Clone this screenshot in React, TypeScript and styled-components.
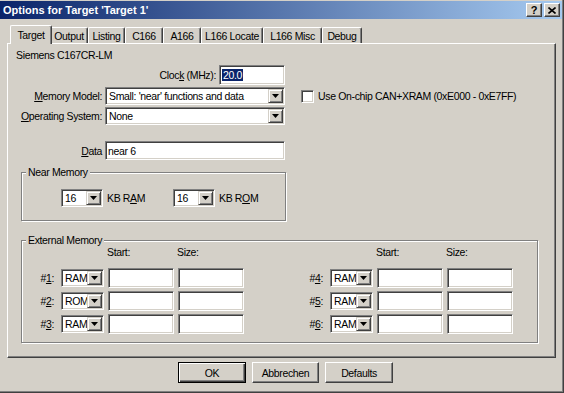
import React from 'react';
import styled, {createGlobalStyle} from 'styled-components';

const FACE = '#d4d0c8';
const SHADOW = '#808080';
const DARK = '#404040';

const GlobalStyle = createGlobalStyle`
  html, body {
    margin: 0;
    padding: 0;
    background: ${FACE};
  }
  body {
    font-family: "Liberation Sans", Arial, sans-serif;
    font-size: 10.5px;
    color: #000;
  }
  * {
    box-sizing: border-box;
  }
`

const Window = styled.div`
  width: 564px;
  height: 393px;
  padding: 1px 1px 0 0;
  background: ${FACE};
  border-right: 1px solid ${DARK};
  border-bottom: 1px solid ${DARK};
  box-shadow: inset -1px -1px 0 ${SHADOW};
  letter-spacing: -0.35px;
  overflow: hidden;
`

const TitleBar = styled.div`
  height: 18px;
  display: flex;
  align-items: center;
  padding: 0 2px 0 3px;
  background: linear-gradient(to right, #0a246a, #a6caf0);
  color: #fff;
  font-size: 11px;
  font-weight: bold;
  letter-spacing: 0;
`

const Title = styled.span`
  flex: 1;
`

const CaptionButtons = styled.div`
  display: flex;
  gap: 2px;
`

const CaptionButton = styled.div`
  width: 16px;
  height: 14px;
  display: flex;
  align-items: center;
  justify-content: center;
  background: ${FACE};
  border: 1px solid;
  border-color: #fff ${DARK} ${DARK} #fff;
  box-shadow: inset -1px -1px 0 ${SHADOW};
  color: #000;
  font-size: 11px;
  font-weight: bold;
  line-height: 1;
`

const TabStrip = styled.div`
  display: flex;
  align-items: flex-end;
  height: 18px;
  margin-top: 6px;
  padding-left: 12px;
`

const Tab = styled.div<{ $w: number; $active?: boolean }>`
  position: relative;
  z-index: ${p => (p.$active ? 1 : 0)};
  width: ${p => p.$w}px;
  height: ${p => (p.$active ? 19 : 16)}px;
  margin: 0 ${p => (p.$active ? -2 : 0)}px ${p => (p.$active ? -1 : 0)}px;
  display: flex;
  align-items: ${p => (p.$active ? 'flex-start' : 'center')};
  padding-top: ${p => (p.$active ? 3 : 0)}px;
  justify-content: center;
  background: ${FACE};
  border-top: 1px solid #fff;
  border-left: 1px solid #fff;
  border-right: 1px solid ${DARK};
  border-radius: 2px 2px 0 0;
  box-shadow: inset -1px 0 0 ${SHADOW};
  white-space: nowrap;
`

const Panel = styled.div`
  width: 549px;
  height: 315px;
  margin-left: 7px;
  border: 1px solid;
  border-color: #fff ${DARK} ${DARK} #fff;
  box-shadow: inset -1px -1px 0 ${SHADOW};
`

const DeviceName = styled.div`
  margin-top: 5px;
  padding-left: 8px;
  line-height: 13px;
`

const FormRow = styled.div<{ $top: number; $h: number }>`
  display: flex;
  align-items: center;
  height: ${p => p.$h}px;
  margin-top: ${p => p.$top}px;
`

const FieldLabel = styled.span<{ $w: number }>`
  width: ${p => p.$w}px;
  flex-shrink: 0;
  padding-right: 3px;
  text-align: right;
  white-space: nowrap;
`

const Sunken = styled.div<{ $w: number }>`
  width: ${p => p.$w}px;
  flex-shrink: 0;
  display: flex;
  align-items: center;
  background: #fff;
  border: 1px solid;
  border-color: ${SHADOW} #fff #fff ${SHADOW};
  box-shadow: inset 1px 1px 0 ${DARK}, inset -1px -1px 0 ${FACE};
  white-space: nowrap;
  overflow: hidden;
`

const TextBox = styled(Sunken)`
  height: 100%;
  padding-left: 2px;
`

const Selected = styled.span`
  background: #0a246a;
  color: #fff;
  padding: 0 1px;
`

const Combo = styled(Sunken)`
  height: 18px;
  padding: 1px;
  align-self: center;
`

const ComboText = styled.span`
  flex: 1;
  padding-left: 2px;
  overflow: hidden;
`

const DropButton = styled.span`
  width: 15px;
  height: 100%;
  flex-shrink: 0;
  display: flex;
  align-items: center;
  justify-content: center;
  background: ${FACE};
  border: 1px solid;
  border-color: ${FACE} ${DARK} ${DARK} ${FACE};
  box-shadow: inset 1px 1px 0 #fff, inset -1px -1px 0 ${SHADOW};
`

const CheckBox = styled(Sunken)`
  height: 13px;
  margin-left: 16px;
`

const CheckLabel = styled.span`
  margin-left: 4px;
  white-space: nowrap;
`

const Group = styled.div<{ $w: number; $h: number; $top: number }>`
  position: relative;
  width: ${p => p.$w}px;
  height: ${p => p.$h}px;
  margin: ${p => p.$top}px 0 0 13px;
  border: 1px solid ${SHADOW};
  box-shadow: inset 1px 1px 0 #fff, 1px 1px 0 #fff;
`

const Legend = styled.span`
  position: absolute;
  top: -7px;
  left: 4px;
  padding: 0 2px;
  line-height: 13px;
  background: ${FACE};
  white-space: nowrap;
`

const NearRow = styled.div`
  display: flex;
  align-items: center;
  height: 18px;
  margin: 16px 0 0 39px;
`

const UnitLabel = styled.span`
  width: 72px;
  padding-left: 4px;
  white-space: nowrap;
`

const ExtColumns = styled.div`
  display: flex;
  gap: 47px;
  padding-top: 5px;
`

const ExtGrid = styled.div`
  display: grid;
  grid-template-columns: 35px 43px 66px 66px;
  grid-template-rows: 19px repeat(3, 20px);
  column-gap: 4px;
  row-gap: 3px;
`

const HeadSpacer = styled.span`
  grid-column: 1 / span 2;
`

const ColHead = styled.span`
  align-self: start;
  margin-left: -1px;
  line-height: 13px;
`

const SlotLabel = styled.span`
  align-self: center;
  padding-right: 3px;
  text-align: right;
`

const ButtonBar = styled.div`
  display: flex;
  gap: 6px;
  margin-top: 4px;
  padding-left: 178px;
`

const Button = styled.div<{ $w: number; $default?: boolean }>`
  width: ${p => p.$w}px;
  height: 21px;
  display: flex;
  align-items: center;
  justify-content: center;
  background: ${FACE};
  border: 1px solid;
  border-color: ${p => (p.$default ? '#000' : `#fff ${DARK} ${DARK} #fff`)};
  box-shadow: ${p =>
    p.$default
      ? `inset 1px 1px 0 #fff, inset -1px -1px 0 ${DARK}, inset -2px -2px 0 ${SHADOW}`
      : `inset -1px -1px 0 ${SHADOW}`};
`

const U = styled.span`
  text-decoration: underline;
`

const Arrow = () => (
  <svg width="7" height="4" viewBox="0 0 7 4">
    <polygon points="0,0 7,0 3.5,4" fill="#000" />
  </svg>
)

const CloseGlyph = () => (
  <svg width="8" height="7" viewBox="0 0 8 7">
    <path d="M0.5 0.5 L7.5 6.5 M7.5 0.5 L0.5 6.5" stroke="#000" strokeWidth="1.6" />
  </svg>
)

const DropDown = ({w, value}: { w: number; value: string }) => (
  <Combo $w={w}>
    <ComboText>{value}</ComboText>
    <DropButton><Arrow /></DropButton>
  </Combo>
)

const tabs = [
  {name: 'Target', w: 42, active: true},
  {name: 'Output', w: 38},
  {name: 'Listing', w: 37},
  {name: 'C166', w: 38},
  {name: 'A166', w: 38},
  {name: 'L166 Locate', w: 62},
  {name: 'L166 Misc', w: 59},
  {name: 'Debug', w: 40},
]

type Slot = { n: string; kind: string }

const ExtBlock = ({slots}: { slots: Slot[] }) => (
  <ExtGrid>
    <HeadSpacer />
    <ColHead>Start:</ColHead>
    <ColHead>Size:</ColHead>
    {slots.map(s => (
      <React.Fragment key={s.n}>
        <SlotLabel>#<U>{s.n}</U>:</SlotLabel>
        <DropDown w={43} value={s.kind} />
        <TextBox $w={66} />
        <TextBox $w={66} />
      </React.Fragment>
    ))}
  </ExtGrid>
)

export default function App() {
  return (
    <Window>
      <GlobalStyle />
      <TitleBar>
        <Title>Options for Target 'Target 1'</Title>
        <CaptionButtons>
          <CaptionButton>?</CaptionButton>
          <CaptionButton><CloseGlyph /></CaptionButton>
        </CaptionButtons>
      </TitleBar>

      <TabStrip>
        {tabs.map(t => (
          <Tab key={t.name} $w={t.w} $active={t.active}>{t.name}</Tab>
        ))}
      </TabStrip>

      <Panel>
        <DeviceName>Siemens C167CR-LM</DeviceName>

        <FormRow $top={3} $h={20}>
          <FieldLabel $w={211}>Cloc<U>k</U> (MHz):</FieldLabel>
          <TextBox $w={66}><Selected>20.0</Selected></TextBox>
        </FormRow>

        <FormRow $top={2} $h={18}>
          <FieldLabel $w={97}><U>M</U>emory Model:</FieldLabel>
          <DropDown w={180} value="Small: 'near' functions and data" />
          <CheckBox $w={13} />
          <CheckLabel>Use On-chip CAN+XRAM (0xE000 - 0xE7FF)</CheckLabel>
        </FormRow>

        <FormRow $top={2} $h={18}>
          <FieldLabel $w={97}><U>O</U>perating System:</FieldLabel>
          <DropDown w={180} value="None" />
        </FormRow>

        <FormRow $top={16} $h={19}>
          <FieldLabel $w={97}><U>D</U>ata</FieldLabel>
          <TextBox $w={180}>near 6</TextBox>
        </FormRow>

        <Group $w={265} $h={49} $top={12}>
          <Legend>Near Memory</Legend>
          <NearRow>
            <DropDown w={42} value="16" />
            <UnitLabel>KB R<U>A</U>M</UnitLabel>
            <DropDown w={42} value="16" />
            <UnitLabel>KB R<U>O</U>M</UnitLabel>
          </NearRow>
        </Group>

        <Group $w={517} $h={103} $top={19}>
          <Legend>External Memory</Legend>
          <ExtColumns>
            <ExtBlock slots={[{n: '1', kind: 'RAM'}, {n: '2', kind: 'ROM'}, {n: '3', kind: 'RAM'}]} />
            <ExtBlock slots={[{n: '4', kind: 'RAM'}, {n: '5', kind: 'RAM'}, {n: '6', kind: 'RAM'}]} />
          </ExtColumns>
        </Group>
      </Panel>

      <ButtonBar>
        <Button $w={68} $default>OK</Button>
        <Button $w={67}>Abbrechen</Button>
        <Button $w={68}>Defaults</Button>
      </ButtonBar>
    </Window>
  );
}
